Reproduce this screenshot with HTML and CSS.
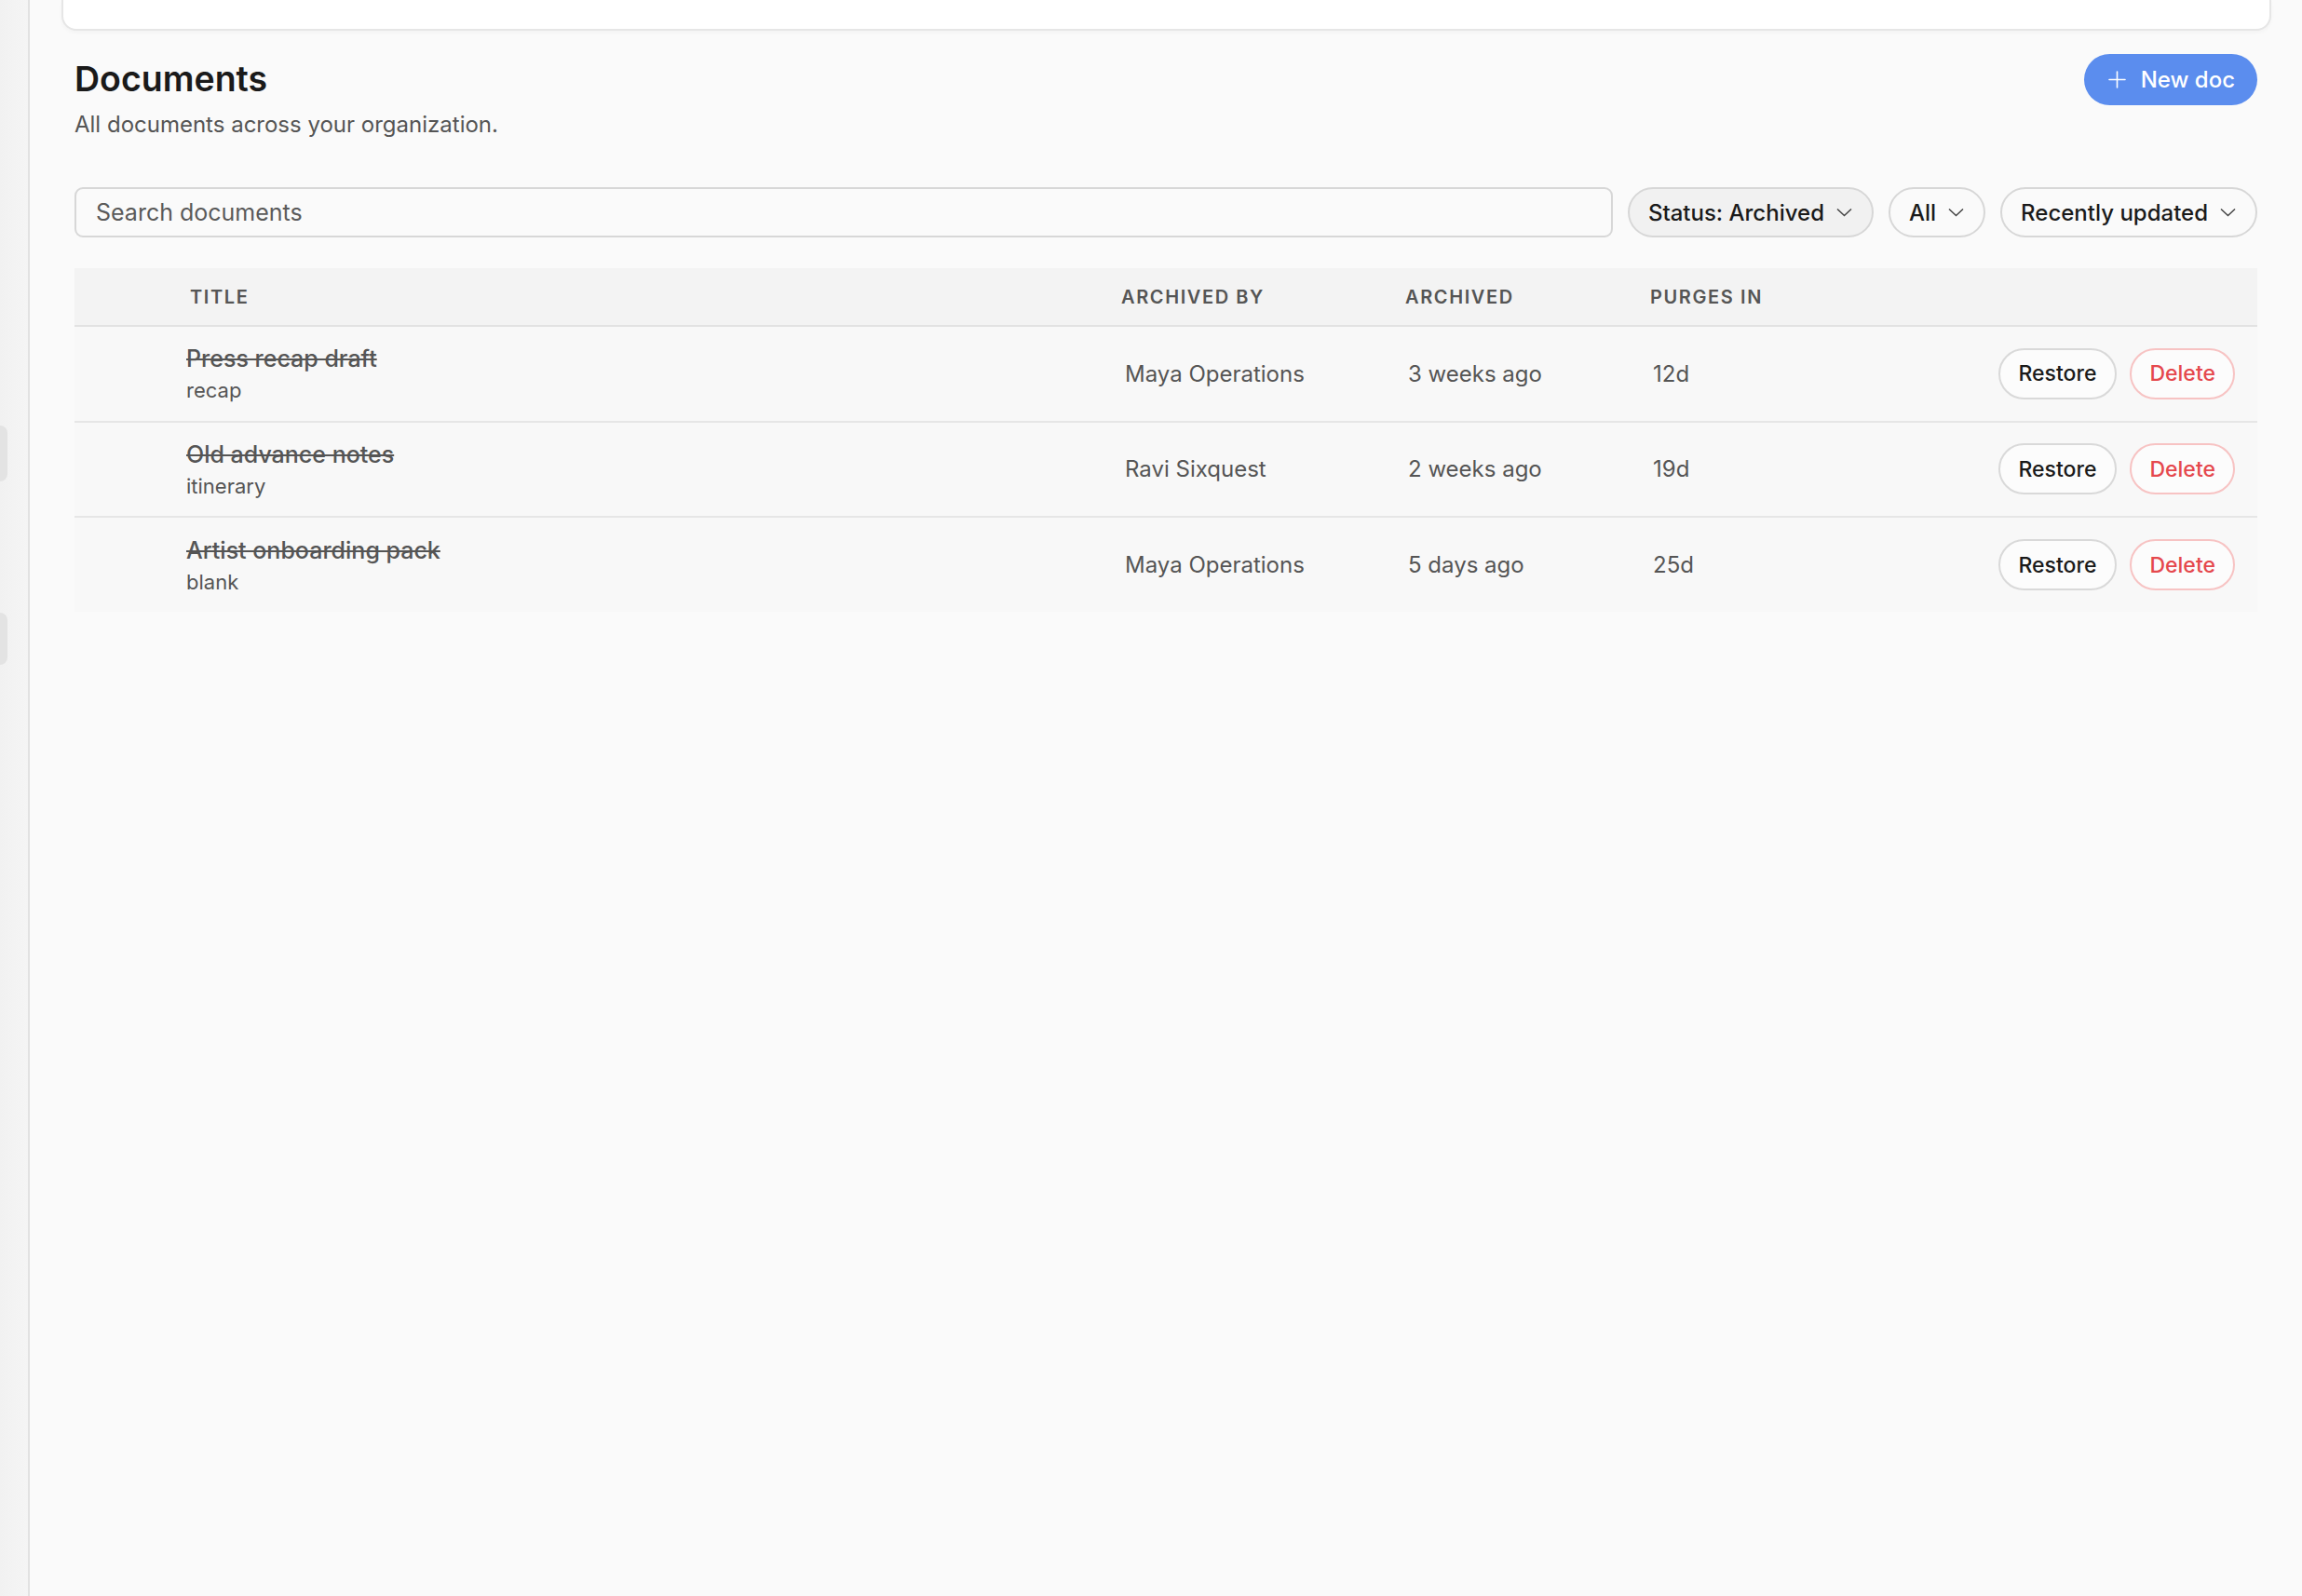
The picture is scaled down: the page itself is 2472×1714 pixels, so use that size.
FILE: index.html
```html
<!DOCTYPE html>
<html>
  <head>
    <title>Documents</title>
    <meta charset="UTF-8">
    <meta name="viewport" content="width=device-width, initial-scale=1.0">
    <link rel="stylesheet" href="styles.css">
  </head>
  <body>
    <div class="sidebar">
      <div class="navitem first"></div>
      <div class="navitem second"></div>
    </div>

    <div class="main">
      <div class="topcard"></div>

      <div class="content">
        <div class="pagehead">
          <div>
            <h1>Documents</h1>
            <p class="subtitle">All documents across your organization.</p>
          </div>
          <button class="newdoc">
            <svg width="19" height="19" viewBox="0 0 19 19"><path d="M9.5 1v17M1 9.5h17" stroke="#fff" stroke-width="1.6" fill="none" stroke-linecap="round"/></svg>
            New doc
          </button>
        </div>

        <div class="filters">
          <input class="search" placeholder="Search documents">
          <button class="pill active">Status: Archived <svg class="chev" viewBox="0 0 17 10"><path d="M1 1.5l7.5 7 7.5-7" /></svg></button>
          <button class="pill">All <svg class="chev" viewBox="0 0 17 10"><path d="M1 1.5l7.5 7 7.5-7" /></svg></button>
          <button class="pill">Recently updated <svg class="chev" viewBox="0 0 17 10"><path d="M1 1.5l7.5 7 7.5-7" /></svg></button>
        </div>

        <div class="table">
          <div class="thead">
            <span></span>
            <span>Title</span>
            <span>Archived by</span>
            <span>Archived</span>
            <span>Purges in</span>
          </div>

          <div class="row">
            <span></span>
            <div class="doc">
              <div class="doctitle">Press recap draft</div>
              <div class="doctype">recap</div>
            </div>
            <span>Maya Operations</span>
            <span>3 weeks ago</span>
            <span>12d</span>
            <div class="actions">
              <button class="btn">Restore</button>
              <button class="btn danger">Delete</button>
            </div>
          </div>

          <div class="row">
            <span></span>
            <div class="doc">
              <div class="doctitle">Old advance notes</div>
              <div class="doctype">itinerary</div>
            </div>
            <span>Ravi Sixquest</span>
            <span>2 weeks ago</span>
            <span>19d</span>
            <div class="actions">
              <button class="btn">Restore</button>
              <button class="btn danger">Delete</button>
            </div>
          </div>

          <div class="row last">
            <span></span>
            <div class="doc">
              <div class="doctitle">Artist onboarding pack</div>
              <div class="doctype">blank</div>
            </div>
            <span>Maya Operations</span>
            <span>5 days ago</span>
            <span>25d</span>
            <div class="actions">
              <button class="btn">Restore</button>
              <button class="btn danger">Delete</button>
            </div>
          </div>
        </div>
      </div>
    </div>
  </body>
</html>
```

FILE: styles.css
```css
* {
  box-sizing: border-box;
}
body,html{
  height:100%;
}
body {
  font-family: Inter, "Noto Sans", sans-serif;
  margin: 0;
  display: flex;
  background: #fafafa;
  color: #1a1a1a;
  overflow: hidden;
}
button, input{
  font-family: inherit;
}

/* collapsed sidebar */
.sidebar{
  width: 32px;
  flex-shrink: 0;
  background: linear-gradient(to right, #f1f1f1, #f5f5f5);
  border-right: 2px solid #e2e2e2;
}
.navitem{
  width: 8px;
  background: #e3e3e3;
  border-radius: 0 10px 10px 0;
}
.navitem.first{
  height: 60px;
  margin-top: 457px;
}
.navitem.second{
  height: 56px;
  margin-top: 141px;
}

.main{
  flex: 1;
  padding: 0 33px 0 34px;
}
.topcard{
  height: 33px;
  background: #fff;
  border: 2px solid #e6e6e6;
  border-top: none;
  border-radius: 0 0 16px 16px;
  box-shadow: 0 2px 4px rgba(0,0,0,.03);
}
.content{
  padding: 0 15px 0 14px;
}

.pagehead{
  display: flex;
  justify-content: space-between;
  align-items: flex-start;
  margin-top: 25px;
}
h1{
  font-size: 37.5px;
  font-weight: 600;
  line-height: 44px;
  margin: 5px 0 0;
}
.subtitle{
  font-size: 24px;
  line-height: 34px;
  margin: 10px 0 0;
  color: #555;
}
.newdoc{
  height: 55px;
  display: flex;
  align-items: center;
  gap: 16px;
  padding: 0 24px 0 26px;
  border: none;
  border-radius: 999px;
  background: #5b8dee;
  color: #fff;
  font-size: 24px;
  font-weight: 500;
}

.filters{
  display: flex;
  gap: 16px;
  margin-top: 50px;
}
.search{
  flex: 1;
  height: 54px;
  border: 2px solid #d7d7d7;
  border-radius: 9px;
  background: #fafafa;
  padding: 0 21px;
  font-size: 25px;
  color: #333;
}
.search::placeholder{
  color: #5a5a5a;
}
.pill{
  height: 54px;
  display: flex;
  align-items: center;
  gap: 13px;
  padding: 0 21px 0 20px;
  border: 2px solid #d7d7d7;
  border-radius: 999px;
  background: #fafafa;
  font-size: 24px;
  font-weight: 500;
  color: #1a1a1a;
}
.pill.active{
  background: #f1f1f1;
}
.chev{
  width: 17px;
  height: 10px;
}
.chev path{
  fill: none;
  stroke: #444;
  stroke-width: 1.5;
}

.table{
  margin-top: 33px;
  background: #f8f8f8;
}
.thead{
  display: grid;
  grid-template-columns: 124px 1000px 305px 263px 1fr;
  align-items: center;
  height: 63px;
  background: #f3f3f3;
  border-bottom: 2px solid #e2e2e2;
  font-size: 20px;
  font-weight: 600;
  letter-spacing: 1.6px;
  text-transform: uppercase;
  color: #555;
}
.row{
  display: grid;
  grid-template-columns: 120px 1008px 304px 263px 1fr auto;
  align-items: center;
  height: 102.5px;
  border-bottom: 2px solid #e6e6e6;
  font-size: 24px;
  color: #555;
}
.row.last{
  border-bottom: none;
  height: 101px;
}
.doctitle{
  font-size: 25px;
  font-weight: 500;
  text-decoration: line-through;
  line-height: 34px;
  color: #555;
}
.doctype{
  font-size: 22px;
  line-height: 30px;
  margin-top: 2px;
  color: #555;
}
.actions{
  display: flex;
  gap: 14px;
  padding-right: 24px;
}
.btn{
  height: 55px;
  padding: 0 20px;
  border: 2px solid #d9d9d9;
  border-radius: 999px;
  background: #fcfcfc;
  font-size: 23px;
  font-weight: 500;
  color: #1a1a1a;
}
.btn.danger{
  padding: 0 19px;
  border-color: #f7c3c3;
  color: #e5484d;
}
```
